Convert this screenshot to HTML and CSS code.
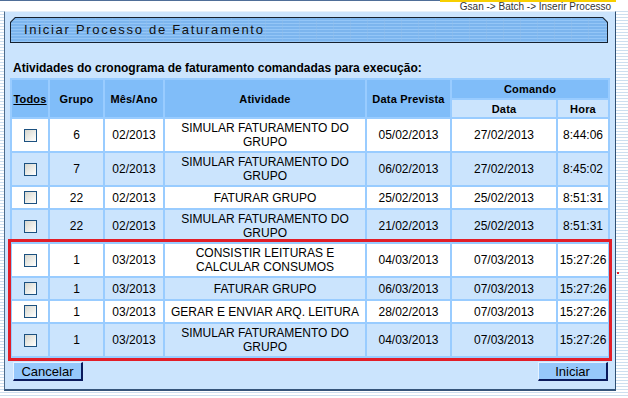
FILE: index.html
```html
<!DOCTYPE html>
<html lang="pt">
<head>
<meta charset="utf-8">
<title>Iniciar Processo de Faturamento</title>
<link rel="stylesheet" href="styles.css">
</head>
<body>
<div class="topbar"><div class="topline"></div><div class="yellow"></div></div>
<div class="crumb">Gsan -&gt; Batch -&gt; Inserir Processo</div>
<div class="panel">
  <div class="title-outer"><div class="title-inner">Iniciar Processo de Faturamento</div></div>
  <div class="heading">Atividades do cronograma de faturamento comandadas para execução:</div>
  <table class="grid">
    <colgroup>
      <col class="c1"><col class="c2"><col class="c3"><col class="c4"><col class="c5"><col class="c6"><col class="c7">
    </colgroup>
    <thead>
      <tr class="h1">
        <th rowspan="2"><span class="link">Todos</span></th>
        <th rowspan="2">Grupo</th>
        <th rowspan="2">Mês/Ano</th>
        <th rowspan="2">Atividade</th>
        <th rowspan="2">Data Prevista</th>
        <th colspan="2">Comando</th>
      </tr>
      <tr class="h2">
        <th class="sub">Data</th>
        <th class="sub">Hora</th>
      </tr>
    </thead>
    <tbody>
      <tr class="w d"><td><input type="checkbox"></td><td>6</td><td>02/2013</td><td>SIMULAR FATURAMENTO DO GRUPO</td><td>05/02/2013</td><td>27/02/2013</td><td>8:44:06</td></tr>
      <tr class="b d"><td><input type="checkbox"></td><td>7</td><td>02/2013</td><td>SIMULAR FATURAMENTO DO GRUPO</td><td>06/02/2013</td><td>27/02/2013</td><td>8:45:02</td></tr>
      <tr class="w s"><td><input type="checkbox"></td><td>22</td><td>02/2013</td><td>FATURAR GRUPO</td><td>25/02/2013</td><td>25/02/2013</td><td>8:51:31</td></tr>
      <tr class="b d"><td><input type="checkbox"></td><td>22</td><td>02/2013</td><td>SIMULAR FATURAMENTO DO GRUPO</td><td>21/02/2013</td><td>25/02/2013</td><td>8:51:31</td></tr>
      <tr class="w d"><td><input type="checkbox"></td><td>1</td><td>03/2013</td><td>CONSISTIR LEITURAS E CALCULAR CONSUMOS</td><td>04/03/2013</td><td>07/03/2013</td><td>15:27:26</td></tr>
      <tr class="b s"><td><input type="checkbox"></td><td>1</td><td>03/2013</td><td>FATURAR GRUPO</td><td>06/03/2013</td><td>07/03/2013</td><td>15:27:26</td></tr>
      <tr class="w s"><td><input type="checkbox"></td><td>1</td><td>03/2013</td><td>GERAR E ENVIAR ARQ. LEITURA</td><td>28/02/2013</td><td>07/03/2013</td><td>15:27:26</td></tr>
      <tr class="b d"><td><input type="checkbox"></td><td>1</td><td>03/2013</td><td>SIMULAR FATURAMENTO DO GRUPO</td><td>04/03/2013</td><td>07/03/2013</td><td>15:27:26</td></tr>
    </tbody>
  </table>
  <div class="buttons">
    <button class="btn">Cancelar</button>
    <button class="btn">Iniciar</button>
  </div>
</div>
<div class="highlight"></div>
<div class="dot"></div>
</body>
</html>
```
FILE: styles.css
```css
html, body {
  margin: 0;
  padding: 0;
}
body {
  width: 628px;
  height: 398px;
  overflow: hidden;
  position: relative;
  font-family: "Liberation Sans", Arial, sans-serif;
  color: #000;
  background: repeating-linear-gradient(180deg, #ffffff 0 2px, #cddfef 2px 3px);
}
.topbar {
  display: flex;
  height: 2px;
  padding-right: 12px;
  background: #fff;
}
.topline {
  flex: 1;
  height: 1px;
  background: #4f6e98;
}
.yellow {
  width: 176px;
  height: 2px;
  background: #f7cf00;
}
.crumb {
  height: 9px;
  line-height: 9px;
  font-size: 10px;
  color: #333;
  text-align: right;
  padding-right: 17px;
  background: #fff;
}
.panel {
  margin: 0 12px 0 4px;
  height: 377px;
  background: #cbe4fd;
  border-top: 1px solid #e6f0fa;
  border-left: 1px solid #4d6b8a;
  border-right: 1px solid #2f4f72;
  border-bottom: 2px solid #35547a;
  display: flex;
  flex-direction: column;
}
.title-outer {
  margin: 5px 7px 0 5px;
  height: 26px;
  background: #15202e;
  clip-path: polygon(5px 0, calc(100% - 5px) 0, 100% 5px, 100% 100%, 0 100%, 0 5px);
  display: flex;
}
.title-inner {
  flex: 1;
  margin: 1px;
  clip-path: polygon(4.5px 0, calc(100% - 4.5px) 0, 100% 4.5px, 100% 100%, 0 100%, 0 4.5px);
  background:
    repeating-linear-gradient(90deg, rgba(255,255,255,0) 0 16px, rgba(150,190,230,0.35) 16px 17px),
    repeating-linear-gradient(180deg, #7cb5ee 0 2px, #94c6f7 2px 3px);
  font-size: 13px;
  letter-spacing: 1.7px;
  line-height: 24px;
  padding-left: 13px;
  color: #111;
}
.heading {
  margin: 18px 0 2px 8px;
  font-size: 12px;
  font-weight: bold;
  line-height: 15px;
}
.grid {
  margin-left: 5px;
  table-layout: fixed;
  width: 600px;
  border-collapse: separate;
  border-spacing: 2px;
  background: #99ccff;
  font-size: 12px;
}
.c1 { width: 36px; }
.c2 { width: 53px; }
.c3 { width: 58px; }
.c4 { width: 200px; }
.c5 { width: 83px; }
.c6 { width: 104px; }
.c7 { width: 50px; }
.grid th, .grid td {
  padding: 0;
  text-align: center;
  vertical-align: middle;
}
.grid th {
  background: #80bdf9;
  font-size: 11px;
  letter-spacing: 0.2px;
  font-weight: bold;
}
.grid th.sub {
  background: #cbe4fd;
}
.h1 th { height: 18px; }
.h2 th { height: 17px; }
.link { text-decoration: underline; }
.grid td {
  line-height: 14px;
}
.w td { background: #ffffff; }
.b td { background: #cbe4fd; }
.s td { height: 21px; }
.d td { height: 32px; }
.grid input[type="checkbox"] {
  appearance: none;
  -webkit-appearance: none;
  display: block;
  margin: 0 auto;
  width: 13px;
  height: 13px;
  border: 1px solid #1c5180;
  background: linear-gradient(135deg, #d6d6ce, #f4f4f0 70%, #ffffff);
}
.buttons {
  display: flex;
  justify-content: space-between;
  margin: 4px 7px 0 8px;
}
.btn {
  width: 70px;
  height: 19px;
  padding: 0;
  font-family: "Liberation Sans", Arial, sans-serif;
  font-size: 13px;
  color: #000;
  background: #96c8fb;
  border-top: 1px solid #e6f2ff;
  border-left: 1px solid #e6f2ff;
  border-right: 2px solid #0a1a5c;
  border-bottom: 2px solid #0a1a5c;
  line-height: 15px;
}
.highlight {
  position: absolute;
  left: 8px;
  top: 239px;
  width: 604px;
  height: 122px;
  box-sizing: border-box;
  border: 3px solid #e21d27;
  pointer-events: none;
}
.dot {
  position: absolute;
  left: 617px;
  top: 272px;
  width: 2px;
  height: 2px;
  background: #e21d27;
}
```
